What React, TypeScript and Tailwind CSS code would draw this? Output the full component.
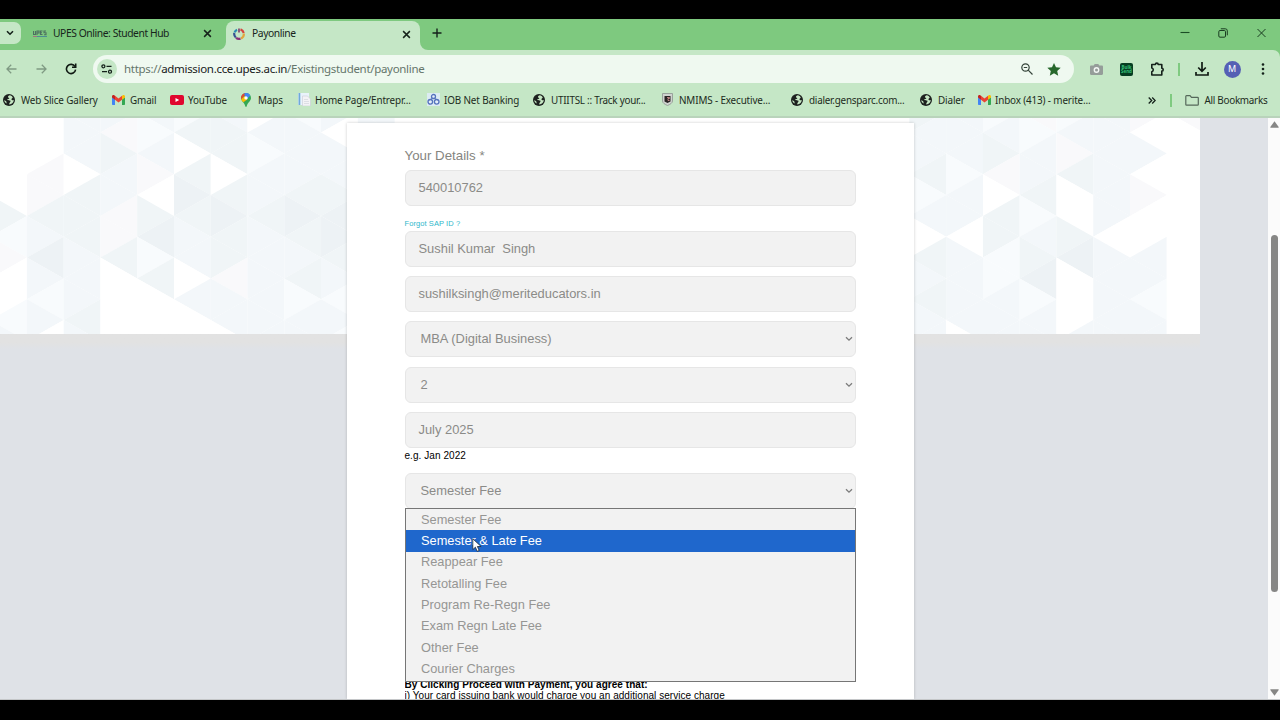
import type { ReactNode } from 'react';

const TONES: Record<string, string> = {
  w: '#ffffff',
  a: '#f8fbfd',
  b: '#f3f7fa',
  c: '#f0f5f7',
  d: '#edf2f5',
  p: '#f9f9fb',
};

// One string per vertical strip of the lattice; one letter per triangle, top to bottom.
const STRIPS: [number, string][] = [
  [-1, 'wwwwwcapwwab'],
  [0, 'wwwppcbdbabw'],
  [1, 'bbbwcccbbbcb'],
  [2, 'bpcbbppcwwww'],
  [3, 'babpwcdacwww'],
  [4, 'acwcdcbbwbww'],
  [5, 'bccwcdccpbbw'],
  [6, 'wbabbcbbbbbb'],
  [7, 'abbbcdcbcabb'],
  [8, 'bwbbcddcbaba'],
  [9, 'bbbbbcccbbab'],
  [24, 'cbbcabwcbcbb'],
  [25, 'bbbabbwbbbbw'],
  [26, 'abcpwccaabbb'],
  [27, 'pabbcabcdabb'],
  [28, 'abpcwwcdwwwb'],
  [29, 'bbbbbbwbbbbb'],
  [30, 'pwbwpwwbbabb'],
  [31, 'pwwwwwwwwwww'],
];

const colX = (k: number) => 26.9 + 36.77 * k;
const rowY = (m: number) => 35.4 + 20.83 * m;

function Lattice() {
  return (
    <svg className="absolute left-0 top-0" width="1200" height="216" viewBox="0 0 1200 216">
      <rect width="1200" height="216" fill="#fff" />
      {STRIPS.flatMap(([k, tones]) =>
        tones.split('').map((t, i) => {
          const m = i - 2;
          const right = (k + m) % 2 === 0;
          const apex = right ? colX(k + 1) : colX(k);
          const base = right ? colX(k) : colX(k + 1);
          return (
            <polygon
              key={`${k}:${m}`}
              fill={TONES[t]}
              points={`${apex},${rowY(m)} ${base},${rowY(m - 1)} ${base},${rowY(m + 1)}`}
            />
          );
        }),
      )}
    </svg>
  );
}

function Globe() {
  return (
    <svg width="12" height="12" viewBox="0 0 12 12" className="shrink-0">
      <circle cx="6" cy="6" r="6" fill="#1d211f" />
      <path d="M7 1.300C5.600 1.700 4.800 2.400 5 3.300c.2.800 1.200.4 1.300 1 .1.500-.6.700-1.200.7-.7 0-1 .6-.5 1.100.6.600 1.600.2 2.400.5.800.3.600 1.100 0 1.600-.6.500-.8 1.300-.8 2.300C9 10.300 10.700 8.400 10.700 6c-.7.200-1.200.2-1.800-.1-.6-.4-.5-1.100 0-1.500.3-.3.700-.4.9-.9A4.800 4.800 0 0 0 7 1.300z" fill="#c5e7c3" />
      <path d="M1.200 6.300c.9.200 1.700.5 2.100 1.200.3.600.1 1.400.6 2.100C2.400 9.100 1.300 7.900 1.200 6.300z" fill="#c5e7c3" />
    </svg>
  );
}

function GmailIcon() {
  return (
    <svg width="13" height="10" viewBox="0 0 13 10" className="shrink-0">
      <path d="M0 2v7.200c0 .4.300.8.800.8H3V4.200z" fill="#4285f4" />
      <path d="M10 4.200V10h2.200c.5 0 .8-.4.800-.8V2z" fill="#34a853" />
      <path d="M3 .8v4l3.500 2.700L10 4.800v-4L6.500 3.500z" fill="#ea4335" />
      <path d="M0 1.500v1L3 4.800v-4l-.8-.5C1.300-.3 0 .3 0 1.500z" fill="#c5221f" />
      <path d="M13 1.500v1L10 4.800v-4l.8-.5c.9-.600 2.200 0 2.200 1.200z" fill="#fbbc04" />
    </svg>
  );
}

function YouTubeIcon() {
  return (
    <svg width="14" height="10" viewBox="0 0 14 10" className="shrink-0">
      <rect width="14" height="10" rx="2" fill="#e0062e" />
      <path d="M5.500 2.900v4.200L9.200 5z" fill="#fff" />
    </svg>
  );
}

function MapsIcon() {
  return (
    <svg width="10" height="14" viewBox="0 0 10 14" className="shrink-0">
      <path d="M5 0a5 5 0 0 1 5 5c0 3.200-3.500 4.500-4.300 8.300-.2.900-1.200.9-1.400 0C3.500 9.500 0 8.200 0 5a5 5 0 0 1 5-5z" fill="#34a853" />
      <path d="M.2 6.200 5.800.1A5 5 0 0 0 1.200 1.800 5 5 0 0 0 .2 6.200z" fill="#ea4335" />
      <path d="M3.200.4A5 5 0 0 1 9.300 2.400L5 7z" fill="#4285f4" />
      <path d="M.2 6.200 3.500 3l2.700 3.500L2.300 9.300C1.300 8.300.5 7.400.2 6.200z" fill="#fbbc04" />
      <circle cx="5" cy="4.900" r="1.700" fill="#fff" />
    </svg>
  );
}

function PageIcon() {
  return (
    <svg width="13" height="13" viewBox="0 0 13 13" className="shrink-0">
      <rect x="0" y="0" width="11" height="12" fill="#e9f3fb" />
      <rect x="0.500" y="0" width="1.800" height="12" fill="#6fa9d8" />
      <path d="M4.500 3h5L12.500 6v7h-8z" fill="#f3f3f6" stroke="#c9ccd6" strokeWidth=".6" />
      <path d="M6 6.500h4M6 8.500h5M6 10.500h5" stroke="#d3d6de" strokeWidth=".7" />
    </svg>
  );
}

function BankIcon() {
  return (
    <svg width="13" height="13" viewBox="0 0 13 13" className="shrink-0">
      <rect width="13" height="13" fill="#dcebf3" />
      <g fill="#e5eefa" stroke="#5573bd" strokeWidth="1.300">
        <circle cx="6.500" cy="3.500" r="2" />
        <circle cx="3.300" cy="8.800" r="2.300" />
        <circle cx="9.700" cy="8.800" r="2.300" />
      </g>
      <path d="M5 5.500 2.500 7M8 5.500 10.500 7" stroke="#5573bd" />
    </svg>
  );
}

function ShieldIcon() {
  return (
    <svg width="11" height="13" viewBox="0 0 11 13" className="shrink-0">
      <path d="M.5.500h10V8c0 2-2.500 3.500-5 4.500C3 11.500.500 10 .500 8z" fill="#cfd3cf" stroke="#8d948f" strokeWidth=".8" />
      <path d="M2.500 3h6v5.500L5.500 10l-3-1.500z" fill="#2a2526" />
      <path d="M5 4.500h2.500v1H6v2h1.500" stroke="#d99" strokeWidth=".8" fill="none" />
    </svg>
  );
}

function Bookmark({ icon, label, width, text }: { icon: ReactNode; label: string; width: string; text: string }) {
  return (
    <div className={`flex shrink-0 items-center ${width}`}>
      {icon}
      <span className={`whitespace-pre ${text}`}>{label}</span>
    </div>
  );
}

function Cross({ size }: { size: number }) {
  return (
    <svg width={size} height={size} viewBox="0 0 8 8" className="shrink-0">
      <path d="M1 1l6 6M7 1L1 7" stroke="#16231a" strokeWidth="1.300" />
    </svg>
  );
}

function TabStrip() {
  return (
    <div className="relative flex h-[31px] shrink-0 items-start bg-[#7ec97f]">
      <div className="mt-[3px] flex h-[22px] w-[21px] shrink-0 items-center rounded-r-[7px] bg-[#c5e7c6] pl-[6px]">
        <svg width="8" height="6" viewBox="0 0 8 6">
          <path d="M1 1.200l3 3 3-3" fill="none" stroke="#14211a" strokeWidth="1.600" />
        </svg>
      </div>
      <div className="flex h-[29px] w-[205px] shrink-0 items-center pl-3">
        <svg width="14" height="8" viewBox="0 0 14 8" className="shrink-0">
          <path d="M.5 1v3.500h2V1M4 5V1h2v2H4M9.500 1H7.500v3.500h2M7.500 2.700h1.500M13 1h-2v1.700h2v2h-2" fill="none" stroke="#4d7060" strokeWidth="1.100" />
          <path d="M0 6.500h4" stroke="#a5707c" />
          <path d="M4 6.500h10" stroke="#4c8d93" />
        </svg>
        <span className="ml-[6px] w-[150px] whitespace-nowrap text-[10.300px] tracking-[-0.42px]">UPES Online: Student Hub</span>
        <Cross size={9} />
      </div>
      <div className="mt-[2px] flex h-[29px] w-[194px] shrink-0 items-center rounded-t-[8px] bg-[#c5e7c6] pb-[3px] pl-[7px]">
        <svg width="12" height="12" viewBox="0 0 12 12" className="shrink-0" fill="none" strokeWidth="2.200">
          <path d="M7.500 1.400A4.800 4.800 0 0 1 10.700 5" stroke="#d5443f" />
          <path d="M10.800 5.500A4.800 4.800 0 0 1 8 10.400" stroke="#e2a53d" />
          <path d="M7.500 10.600A4.800 4.800 0 0 1 3 9.800" stroke="#8a2f78" />
          <path d="M2.800 9.500A4.800 4.800 0 0 1 1.300 5" stroke="#36508f" />
          <path d="M1.500 4.500A4.800 4.800 0 0 1 4 1.700" stroke="#2c8bb2" />
          <path d="M6 .5v4" stroke="#7b2d63" strokeWidth="1.500" />
        </svg>
        <span className="ml-[7px] w-[150px] text-[10.300px] tracking-[-0.42px]">Payonline</span>
        <Cross size={9} />
      </div>
      <svg width="10" height="10" viewBox="0 0 10 10" className="ml-[12px] mt-[9px] shrink-0">
        <path d="M5 .5v9M.5 5h9" stroke="#14211a" strokeWidth="1.400" />
      </svg>
      <div className="ml-auto flex items-center pr-[14px] pt-[9px]">
        <svg width="10" height="10" viewBox="0 0 10 10" className="mr-[28px]">
          <path d="M.5 4.500h9" stroke="#1b4d25" strokeWidth="1.100" />
        </svg>
        <svg width="10" height="10" viewBox="0 0 10 10" className="mr-[29px]" fill="none" stroke="#1b3d22">
          <rect x=".8" y="2.500" width="6.700" height="6.700" rx="1.200" />
          <path d="M2.800.800h4.500A2 2 0 0 1 9.300 2.800v4.500" />
        </svg>
        <svg width="9" height="10" viewBox="0 0 9 10">
          <path d="M.5 1l8 8M8.500 1l-8 8" stroke="#1b3d22" strokeWidth="1" />
        </svg>
      </div>
      <svg className="absolute bottom-0 left-[218px]" width="8" height="8">
        <path d="M8 0v8H0A8 8 0 0 0 8 0z" fill="#c5e7c6" />
      </svg>
      <svg className="absolute bottom-0 left-[420px]" width="8" height="8">
        <path d="M0 0v8h8A8 8 0 0 1 0 0z" fill="#c5e7c6" />
      </svg>
    </div>
  );
}

function Toolbar() {
  return (
    <div className="bg-[#7ec97f]">
      <div className="flex h-[36px] shrink-0 items-center rounded-tr-[7px] bg-[#c5e7c6] pt-[2px]">
        <svg width="11" height="10" viewBox="0 0 11 10" className="ml-[6px]" fill="none" stroke="#7f9a83" strokeWidth="1.300">
          <path d="M10.500 5H1M5.200.800L1 5l4.200 4.200" />
        </svg>
        <svg width="11" height="10" viewBox="0 0 11 10" className="ml-[19px]" fill="none" stroke="#7f9a83" strokeWidth="1.300">
          <path d="M.5 5H10M5.800.800L10 5 5.800 9.200" />
        </svg>
        <svg width="12" height="12" viewBox="0 0 12 12" className="ml-[18px]" fill="none" stroke="#101a13" strokeWidth="1.600">
          <path d="M10 3.600A4.600 4.600 0 1 0 10.600 6.700" />
          <path d="M10.700.5v3.800H7" />
        </svg>
        <div className="ml-[16px] flex h-[28px] w-[981px] shrink-0 items-center rounded-full bg-[#eff9f0] pl-[4px]">
          <div className="flex h-[20px] w-[20px] items-center justify-center rounded-full bg-[#c5e7c6]">
            <svg width="12" height="10" viewBox="0 0 12 10" fill="none" stroke="#15211a" strokeWidth="1.300">
              <circle cx="2.400" cy="2.300" r="1.500" />
              <path d="M5.500 2.300h5M1 7.700h5" />
              <circle cx="9" cy="7.700" r="1.500" />
            </svg>
          </div>
          <span className="ml-[7px] whitespace-nowrap text-[11.500px] tracking-[-0.31px] text-[#65756b]">
            https://<span className="text-[#18201b]">admission.cce.upes.ac.in</span>/Existingstudent/payonline
          </span>
          <svg width="12" height="12" viewBox="0 0 12 12" className="ml-auto" fill="none" stroke="#35443a" strokeWidth="1.200">
            <circle cx="4.500" cy="4.500" r="3.700" />
            <path d="M7.200 7.200l4.300 4.300M2.800 4.500h3.400" />
          </svg>
          <svg width="14" height="13" viewBox="0 0 14 13" className="ml-[14px] mr-[13px]">
            <path d="M7 0l2 4.300 4.700.5-3.500 3.200 1 4.700L7 10.300l-4.200 2.400 1-4.700L.3 4.800 5 4.300z" fill="#27682c" />
          </svg>
        </div>
        <svg width="13" height="11" viewBox="0 0 13 11" className="ml-[16px]">
          <path d="M1.200 1.500h2.500L4.700 0h3.600l1 1.500h2.500c.7 0 1.200.5 1.200 1.200v7.100c0 .7-.5 1.200-1.200 1.200H1.200C.5 11 0 10.500 0 9.800V2.700c0-.7.500-1.200 1.200-1.200z" fill="#959d99" />
          <circle cx="6.500" cy="6" r="2.900" fill="#f3f7f4" />
          <circle cx="6.500" cy="6" r="1.500" fill="#949c98" />
        </svg>
        <div className="ml-[17px] flex h-[13px] w-[13px] flex-col items-center justify-center rounded-[2px] bg-[#063d22] text-[4.500px] font-bold leading-[4.500px] text-[#35bf78]">
          <span>Bulk</span>
          <span>Send</span>
        </div>
        <svg width="15" height="14" viewBox="0 0 15 14" className="ml-[17px]" fill="none" stroke="#14211a" strokeWidth="1.600">
          <path d="M1.800 2.500h3.600a1.400 1.400 0 0 1 2.800 0h3.600v3.800a1.400 1.400 0 0 1 0 2.800V13h-10V9.700a1.900 1.900 0 0 0 0-3.700z" strokeLinejoin="round" />
        </svg>
        <div className="ml-[13px] h-[13px] w-[1.500px] bg-[#7fca80]" />
        <svg width="14" height="14" viewBox="0 0 14 14" className="ml-[15px]" fill="none" stroke="#101a13" strokeWidth="1.700">
          <path d="M7 0v9M3.200 5.500L7 9.300l3.800-3.800M1 10v3h12v-3" />
        </svg>
        <div className="ml-[15px] flex h-[17px] w-[17px] items-center justify-center rounded-full bg-[#5560b4] text-[9px] text-white">M</div>
        <svg width="4" height="12" viewBox="0 0 4 12" className="ml-[20px]" fill="#14211a">
          <circle cx="2" cy="1.500" r="1.300" />
          <circle cx="2" cy="6" r="1.300" />
          <circle cx="2" cy="10.500" r="1.300" />
        </svg>
      </div>
    </div>
  );
}

function BookmarksBar() {
  return (
    <div className="flex h-[32px] shrink-0 items-center border-b-2 border-[#b9d3bb] bg-[#c5e7c6] pb-[2px] pl-[3px] text-[9.900px] tracking-[-0.14px] text-[#1c2b21]">
      <Bookmark icon={<Globe />} label="Web Slice Gallery" width="w-[109px]" text="ml-[6px]" />
      <Bookmark icon={<GmailIcon />} label="Gmail" width="w-[58px]" text="ml-[5px]" />
      <Bookmark icon={<YouTubeIcon />} label="YouTube" width="w-[71px]" text="ml-[4px]" />
      <Bookmark icon={<MapsIcon />} label="Maps" width="w-[57px]" text="ml-[7px]" />
      <Bookmark icon={<PageIcon />} label="Home Page/Entrepr..." width="w-[129px]" text="ml-[4px]" />
      <Bookmark icon={<BankIcon />} label="IOB Net Banking" width="w-[106px]" text="ml-[4px]" />
      <Bookmark icon={<Globe />} label="UTIITSL :: Track your..." width="w-[129px]" text="ml-[6px] tracking-[-0.25px]" />
      <Bookmark icon={<ShieldIcon />} label="NMIMS - Executive..." width="w-[129px]" text="ml-[6px]" />
      <Bookmark icon={<Globe />} label="dialer.gensparc.com..." width="w-[129px]" text="ml-[6px] tracking-[-0.24px]" />
      <Bookmark icon={<Globe />} label="Dialer" width="w-[58px]" text="ml-[6px]" />
      <Bookmark icon={<GmailIcon />} label="Inbox (413) - merite..." width="w-[170px]" text="ml-[4px]" />
      <svg width="8" height="7" viewBox="0 0 8 7" fill="none" stroke="#14211a" strokeWidth="1.300" className="shrink-0">
        <path d="M.7.500l3 3-3 3M4.200.500l3 3-3 3" />
      </svg>
      <div className="ml-[14px] h-[13px] w-[1.500px] shrink-0 bg-[#7fca80]" />
      <svg width="14" height="11" viewBox="0 0 14 11" fill="none" stroke="#55685a" strokeWidth="1.200" className="ml-[13px] shrink-0">
        <path d="M.8 1.500c0-.5.300-.8.700-.8H5l1.500 1.600h6c.5 0 .8.300.8.800v6.300c0 .5-.3.800-.8.800h-11c-.4 0-.7-.3-.7-.8z" />
      </svg>
      <span className="ml-[6px] whitespace-nowrap tracking-[-0.28px]">All Bookmarks</span>
    </div>
  );
}

function Field({ value, gap, select }: { value: string; gap: string; select?: boolean }) {
  return (
    <div
      className={`flex h-[36px] shrink-0 items-center justify-between rounded-[6px] border border-[#e6e6e6] bg-[#f2f2f2] pr-[2px] text-[12.900px] text-[#8b8b88] ${gap} ${select ? 'pl-[15px]' : 'pl-[13px]'}`}
    >
      <span className="whitespace-pre">{value}</span>
      {select && (
        <svg width="8" height="6" viewBox="0 0 8 6">
          <path d="M1 1.200l3 3 3-3" fill="none" stroke="#7c7c7c" strokeWidth="1.300" />
        </svg>
      )}
    </div>
  );
}

const OPTIONS = [
  'Semester Fee',
  'Semester & Late Fee',
  'Reappear Fee',
  'Retotalling Fee',
  'Program Re-Regn Fee',
  'Exam Regn Late Fee',
  'Other Fee',
  'Courier Charges',
];

function FeeMenu() {
  return (
    <div className="absolute left-[58px] top-[385px] flex h-[174px] w-[451px] flex-col border border-[#767676] bg-[#f2f2f2] pb-[1px] text-[12.800px]">
      {OPTIONS.map((option, i) => (
        <div
          key={option}
          className={`flex flex-1 items-center pb-[1px] pl-[15px] ${i === 1 ? 'bg-[#1f67cc] text-white' : 'text-[#969694]'}`}
        >
          {option}
        </div>
      ))}
      <svg className="absolute left-[66px] top-[29px]" width="10" height="14" viewBox="0 0 10 14">
        <path d="M.8.800v10.800l2.600-2.400 1.700 4.100 2.100-.8-1.800-4h3.700z" fill="#fff" stroke="#1c2633" strokeWidth=".8" />
      </svg>
    </div>
  );
}

function PaymentForm() {
  return (
    <div className="relative ml-[347px] mt-[5px] flex h-[576px] w-[567px] flex-col bg-white pl-[57.500px] pr-[58px] font-['Liberation_Sans',Arial,sans-serif] shadow-[0_0_3px_rgba(0,0,0,0.2)]">
      <span className="mt-[24px] h-[18px] text-[13.300px] leading-[18px] text-[#85857f]">Your Details *</span>
      <Field value="540010762" gap="mt-[5px]" />
      <span className="mt-[13px] h-[10px] text-[7.500px] leading-[10px] tracking-[0.08px] text-[#2fb8cb]">Forgot SAP ID ?</span>
      <Field value="Sushil Kumar  Singh" gap="mt-[2px]" />
      <Field value="sushilksingh@meriteducators.in" gap="mt-[9px]" />
      <Field value="MBA (Digital Business)" gap="mt-[9px]" select />
      <Field value="2" gap="mt-[9.500px]" select />
      <Field value="July 2025" gap="mt-[9px]" />
      <span className="mt-[2px] h-[12px] text-[10px] leading-[12px] tracking-[0.06px] text-black">e.g. Jan 2022</span>
      <Field value="Semester Fee" gap="mt-[11.500px]" select />
      <div className="mt-[148px] h-[2px] w-[2px] shrink-0 bg-[#777777]" />
      <div className="mt-[20px] flex h-[21px] flex-col overflow-hidden whitespace-nowrap text-[10px] leading-[11px] tracking-[0.04px] text-black">
        <b>By Clicking Proceed with Payment, you agree that:</b>
        <span>i) Your card issuing bank would charge you an additional service charge</span>
      </div>
      <FeeMenu />
    </div>
  );
}

function Scrollbar() {
  return (
    <div className="flex w-[12px] shrink-0 flex-col items-center bg-[#fbfbfb]">
      <svg width="9" height="7" viewBox="0 0 9 7" className="mt-[3px]">
        <path d="M4.500.300 8.700 6c.1.300 0 .7-.4.700H.7C.3 6.700.2 6.300.3 6z" fill="#868685" />
      </svg>
      <div className="mt-[107px] h-[357px] w-[7px] rounded-full bg-[#868685]" />
      <svg width="9" height="7" viewBox="0 0 9 7" className="mb-[3px] mt-auto">
        <path d="M4.500 6.700.3 1C.2.700.3.300.7.300h7.600c.4 0 .5.400.4.700z" fill="#868685" />
      </svg>
    </div>
  );
}

export default function App() {
  return (
    <div className="flex h-[720px] w-[1280px] flex-col overflow-hidden bg-black pt-[19px] font-['Noto_Sans','Open_Sans',sans-serif] text-[#17241b]">
      <TabStrip />
      <Toolbar />
      <BookmarksBar />
      <div className="flex h-[582px] shrink-0 overflow-hidden border-b border-[#c4c6c8] bg-[#dfe2e7]">
        <div className="relative w-[1268px] shrink-0">
          <div className="absolute left-0 top-[215px] h-[16px] w-[1200px] bg-gradient-to-b from-[#e2e2e2] from-60% to-[#dfe2e7]" />
          <Lattice />
          <PaymentForm />
        </div>
        <Scrollbar />
      </div>
    </div>
  );
}
